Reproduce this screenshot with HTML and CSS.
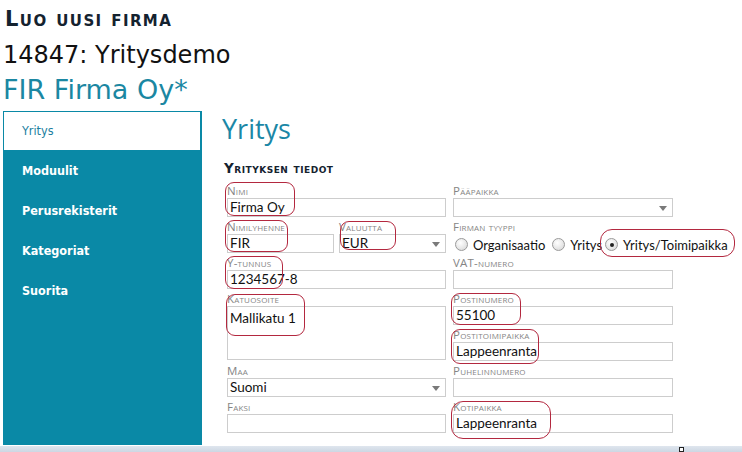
FILE: index.html
```html
<!DOCTYPE html>
<html lang="fi">
<head>
  <meta charset="UTF-8">
  <title>Luo uusi firma</title>
  <link rel="stylesheet" href="styles.css">
</head>
<body>

  <div class="page-head">
    <h1 class="page-title">Luo uusi firma</h1>
    <div class="company-id">14847: Yritysdemo</div>
    <div class="company-name">FIR Firma Oy*</div>
  </div>

  <div class="layout">
    <nav class="sidebar">
      <a class="nav-item active">Yritys</a>
      <a class="nav-item">Moduulit</a>
      <a class="nav-item">Perusrekisterit</a>
      <a class="nav-item">Kategoriat</a>
      <a class="nav-item">Suorita</a>
    </nav>

    <main class="content">
      <h2 class="section-title">Yritys</h2>
      <h3 class="group-title">Yrityksen tiedot</h3>

      <div class="form">
        <div class="field">
          <label>Nimi</label>
          <div class="input">Firma Oy</div>
          <span class="mark mark-nimi"></span>
        </div>
        <div class="field">
          <label>Pääpaikka</label>
          <div class="input select"></div>
        </div>

        <div class="field-pair">
          <div class="field">
            <label>Nimilyhenne</label>
            <div class="input">FIR</div>
            <span class="mark mark-lyhenne"></span>
          </div>
          <div class="field">
            <label>Valuutta</label>
            <div class="input select">EUR</div>
            <span class="mark mark-valuutta"></span>
          </div>
        </div>
        <div class="field">
          <label>Firman tyyppi</label>
          <div class="radios">
            <span class="radio"></span><span class="radio-text">Organisaatio</span>
            <span class="radio"></span><span class="radio-text">Yritys</span>
            <span class="radio checked"></span><span class="radio-text">Yritys/Toimipaikka</span>
          </div>
          <span class="mark mark-tyyppi"></span>
        </div>

        <div class="field">
          <label>Y-tunnus</label>
          <div class="input">1234567-8</div>
          <span class="mark mark-ytunnus"></span>
        </div>
        <div class="field">
          <label class="keep-case">VAT-numero</label>
          <div class="input"></div>
        </div>

        <div class="field tall">
          <label>Katuosoite</label>
          <div class="input textarea">Mallikatu 1</div>
          <span class="mark mark-katu"></span>
        </div>
        <div class="field">
          <label>Postinumero</label>
          <div class="input">55100</div>
          <span class="mark mark-postinro"></span>
        </div>
        <div class="field">
          <label>Postitoimipaikka</label>
          <div class="input">Lappeenranta</div>
          <span class="mark mark-postitp"></span>
        </div>

        <div class="field">
          <label>Maa</label>
          <div class="input select">Suomi</div>
        </div>
        <div class="field">
          <label>Puhelinnumero</label>
          <div class="input"></div>
        </div>

        <div class="field">
          <label>Faksi</label>
          <div class="input"></div>
        </div>
        <div class="field">
          <label>Kotipaikka</label>
          <div class="input">Lappeenranta</div>
          <span class="mark mark-koti"></span>
        </div>
      </div>
    </main>
  </div>

  <div class="status-bar"><span class="grip"></span></div>

</body>
</html>
```

FILE: styles.css
```css
body {
  margin: 0;
  background: white;
  font-family: "DejaVu Sans", Verdana, sans-serif;
  color: #111;
  overflow: hidden;
}

.page-head {
  padding-left: 3px;
  height: 111px;
}

.page-title {
  margin: 0;
  padding: 6px 0 0 2px;
  font-size: 21px;
  line-height: 26px;
  font-weight: bold;
  font-variant: small-caps;
  text-transform: lowercase;
  color: #14222f;
  letter-spacing: 1.4px;
}

.page-title::first-letter {
  text-transform: uppercase;
}

.company-id {
  font-size: 24px;
  line-height: 30px;
  margin-top: 8px;
}

.company-name {
  font-size: 27px;
  line-height: 36px;
  margin-top: 2px;
  color: #1b87a2;
}

.layout {
  display: flex;
  margin-left: 3px;
  height: 334px;
}

.sidebar {
  width: 199px;
  background: #0a89a6;
  display: flex;
  flex-direction: column;
}

.nav-item {
  height: 40px;
  line-height: 40px;
  padding-left: 19px;
  color: white;
  font-family: "DejaVu Sans Condensed", "DejaVu Sans", sans-serif;
  font-size: 12.5px;
  font-weight: bold;
}

.nav-item.active {
  background: white;
  color: #1c7f9f;
  font-weight: normal;
  border: 1px solid #0a89a6;
  border-right-width: 2px;
  height: 38px;
  line-height: 38px;
  padding-left: 18px;
}

.content {
  padding-left: 20px;
  font-family: Lato, "Open Sans", sans-serif;
}

.section-title {
  margin: 0;
  font-family: "Open Sans", sans-serif;
  font-size: 27px;
  line-height: 36px;
  font-weight: normal;
  color: #1b87a6;
}

.group-title {
  margin: 14px 0 0 2px;
  font-family: "DejaVu Sans", sans-serif;
  font-size: 13.5px;
  line-height: 14px;
  font-weight: bold;
  font-variant: small-caps;
  text-transform: lowercase;
  color: #14222f;
  letter-spacing: 0.5px;
}

.group-title::first-letter {
  text-transform: uppercase;
}

.form {
  margin: 8px 0 0 5px;
  display: grid;
  grid-template-columns: 219px 220px;
  grid-auto-rows: 36px;
  column-gap: 7px;
}

.field {
  position: relative;
  display: flex;
  flex-direction: column;
}

.field.tall {
  grid-row: span 2;
}

.field-pair {
  display: grid;
  grid-template-columns: 107px 107px;
  column-gap: 5px;
}

.field label {
  font-family: "Open Sans", sans-serif;
  font-size: 11.5px;
  line-height: 15px;
  font-variant: small-caps;
  text-transform: lowercase;
  color: #858585;
  letter-spacing: 0.2px;
}

.field label::first-letter {
  text-transform: uppercase;
}

.field label.keep-case {
  text-transform: none;
}

.input {
  position: relative;
  height: 17px;
  border: 1px solid #cdcdcd;
  padding-left: 2px;
  font-size: 13.5px;
  line-height: 17px;
  color: #111;
  background: white;
}

.input.textarea {
  height: 52px;
  line-height: 22px;
}

.input.select::after {
  content: "";
  position: absolute;
  right: 5px;
  top: 7px;
  border-left: 4px solid transparent;
  border-right: 4px solid transparent;
  border-top: 5px solid #7a7a7a;
}

.radios {
  display: flex;
  align-items: center;
  height: 19px;
  margin-top: 1px;
  font-size: 13px;
  white-space: nowrap;
}

.radio {
  flex-shrink: 0;
  width: 11px;
  height: 11px;
  border: 1px solid #9a9a9a;
  border-radius: 50%;
  background: radial-gradient(circle at 40% 35%, #ffffff, #d4d4d4);
  margin-left: 2px;
  margin-right: 5px;
  position: relative;
}

.radio.checked::after {
  content: "";
  position: absolute;
  left: 3.5px;
  top: 3.5px;
  width: 4px;
  height: 4px;
  border-radius: 50%;
  background: #222;
}

.radio-text {
  margin-right: 1px;
}

.radio-text:nth-of-type(2) {
  margin-right: 5px;
}

.mark {
  position: absolute;
  left: -2px;
  border: 1px solid #b3283f;
  border-radius: 9px;
}

.mark-nimi { top: -1px; width: 68px; height: 32px; }
.mark-lyhenne { top: 1px; width: 61px; height: 30px; }
.mark-valuutta { top: 2px; left: 1px; width: 54px; height: 27px; }
.mark-ytunnus { top: 1px; width: 56px; height: 31px; }
.mark-katu { top: 3px; left: -1px; width: 77px; height: 40px; }
.mark-tyyppi { top: 10px; left: 147px; width: 133px; height: 26px; border-radius: 12px; }
.mark-postinro { top: 2px; width: 68px; height: 30px; }
.mark-postitp { top: 2px; width: 86px; height: 33px; }
.mark-koti { top: 2px; width: 98px; height: 36px; border-radius: 12px; }

.status-bar {
  height: 8px;
  margin-top: 1px;
  background: linear-gradient(#dfe6ee, #c6d2df);
  position: relative;
}

.grip {
  position: absolute;
  left: 679px;
  top: 1px;
  width: 3px;
  height: 3px;
  border: 1px solid #222;
  background: white;
}
```
